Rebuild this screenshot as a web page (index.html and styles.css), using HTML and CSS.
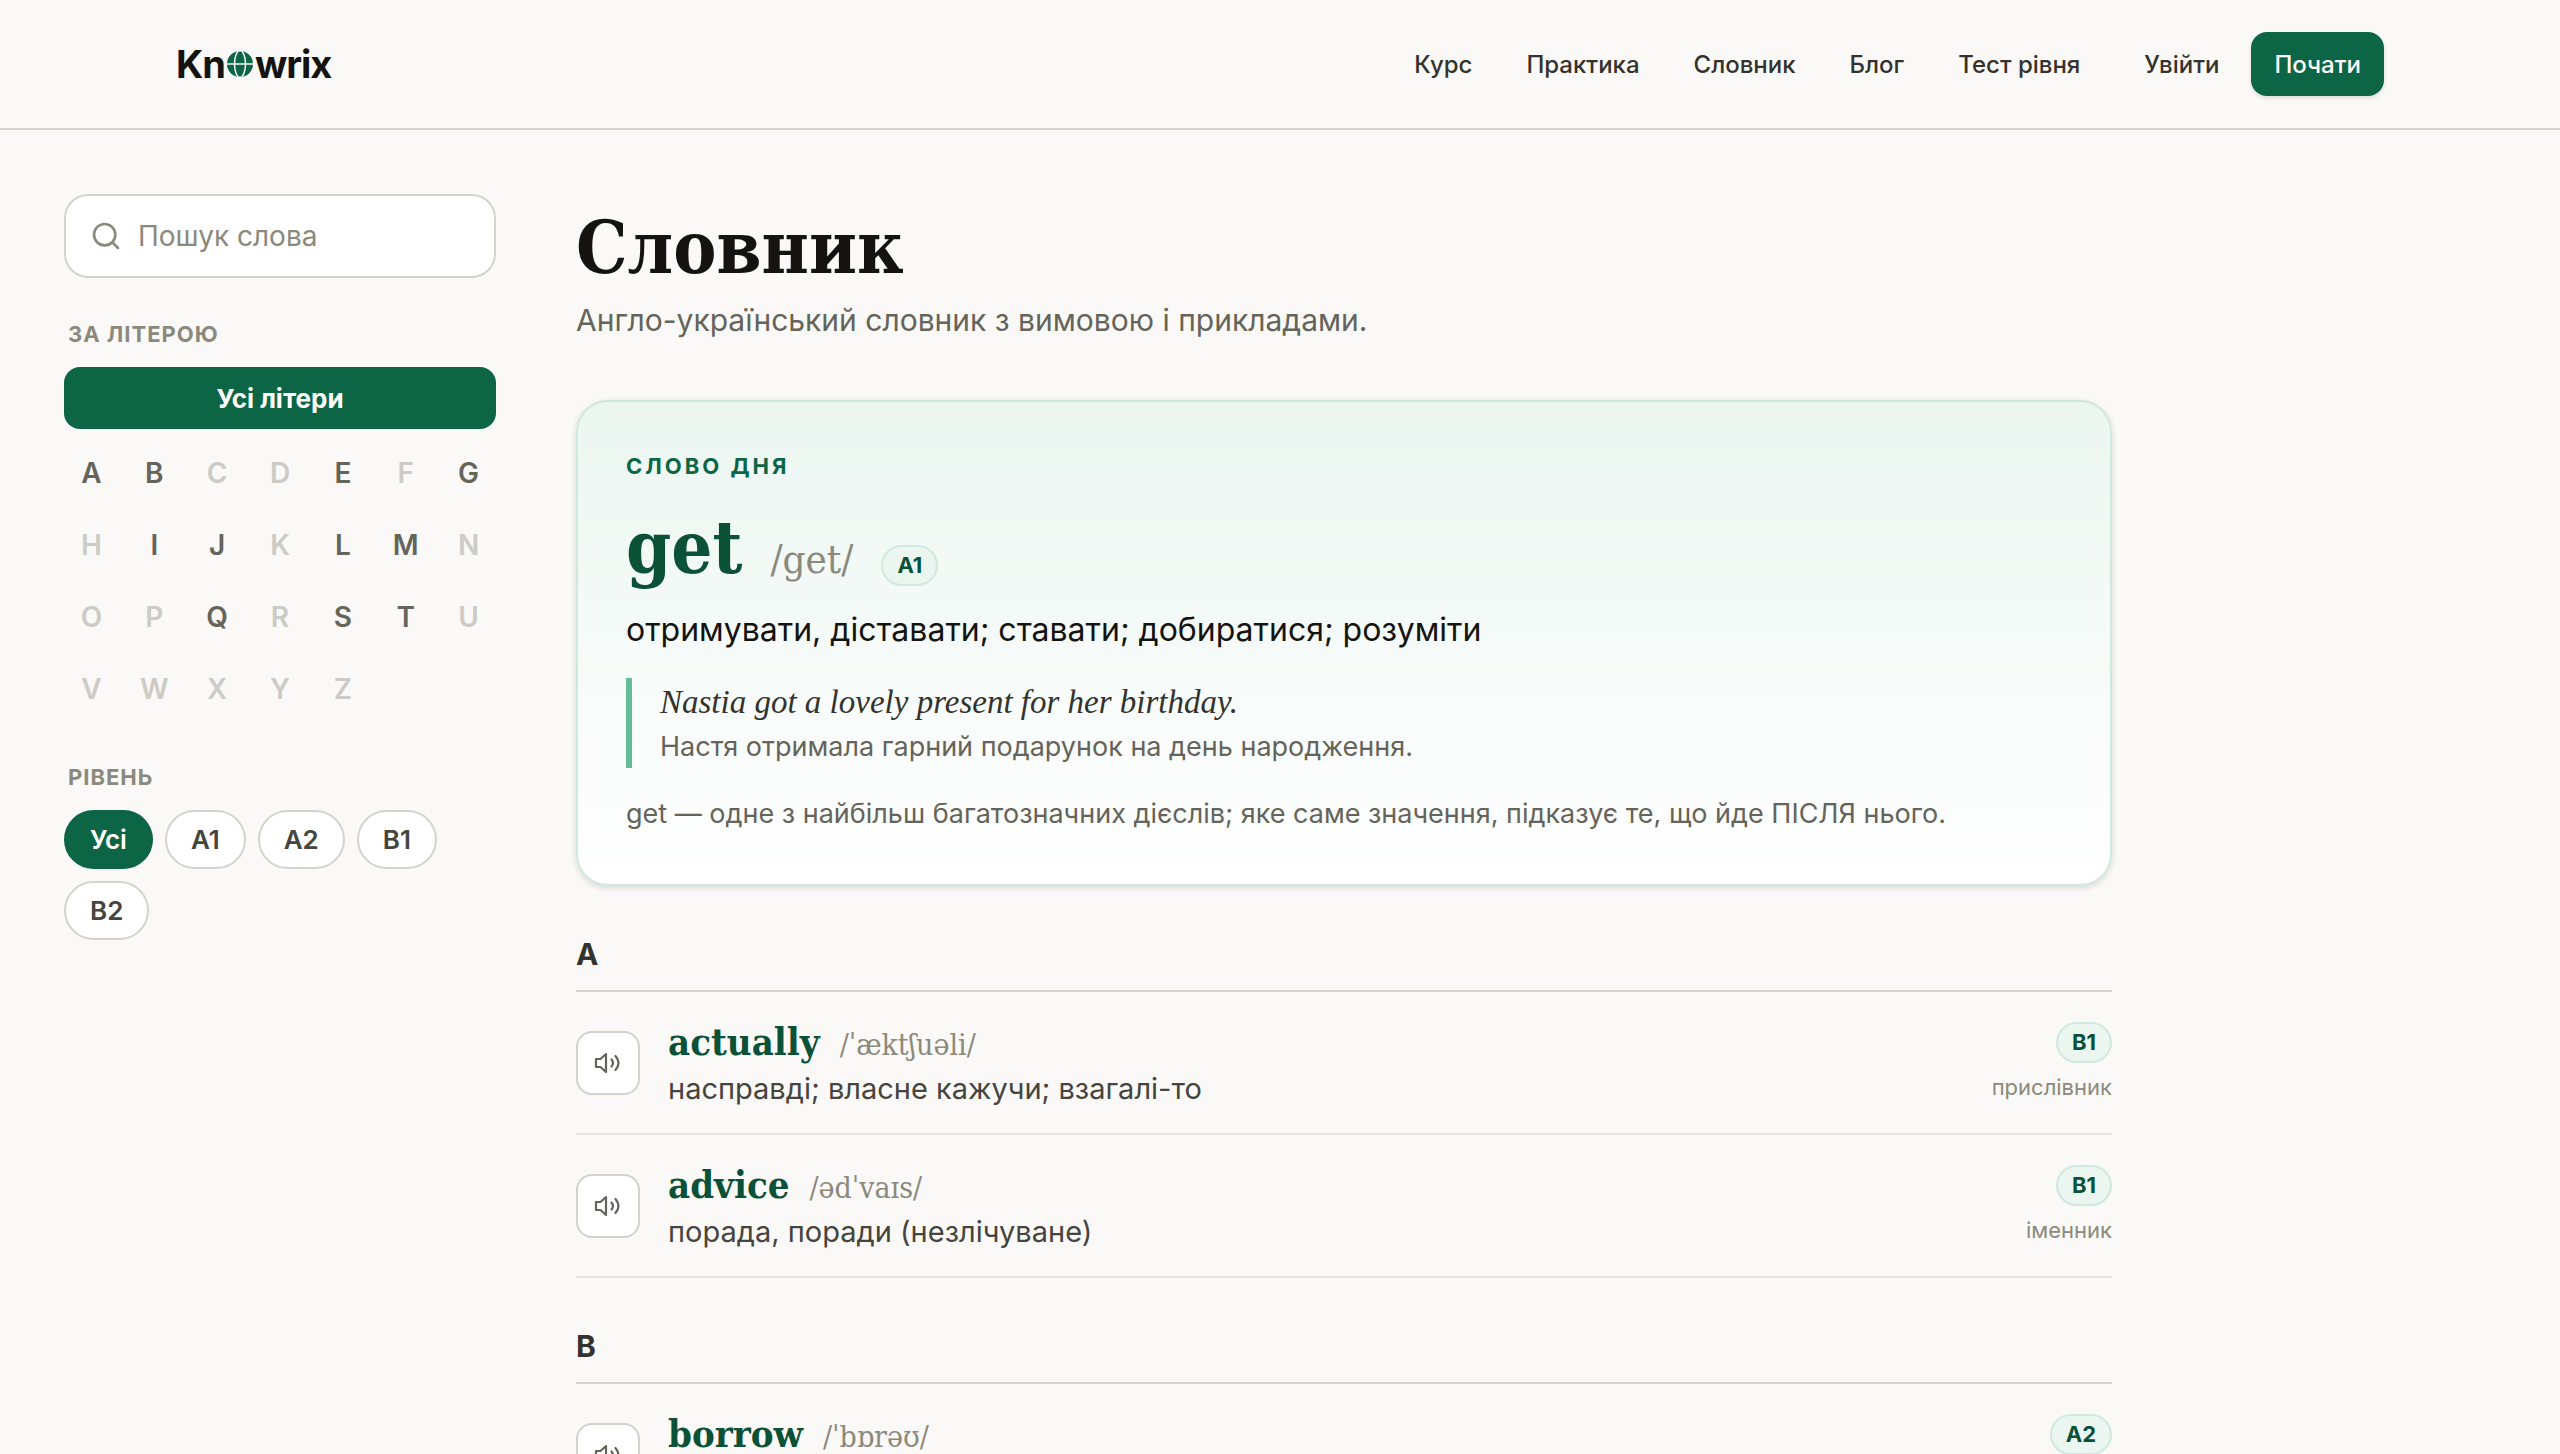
FILE: index.html
```html
<!DOCTYPE html>
<html lang="uk">
<head>
<meta charset="utf-8">
<title>Словник — Knowrix</title>
<meta name="viewport" content="width=device-width, initial-scale=1">
<link rel="stylesheet" href="styles.css">
</head>
<body>
<svg class="sprite" aria-hidden="true">
  <symbol id="speaker" viewBox="0 0 28 28" fill="none" stroke="currentColor" stroke-width="2.200" stroke-linecap="round" stroke-linejoin="round">
    <path d="M2 10v8h4.500l5.500 5V5l-5.500 5z"/>
    <path d="M17.500 10.500q3 3.500 0 7"/>
    <path d="M21.500 7q6 7 0 14"/>
  </symbol>
</svg>
<header class="site-header">
  <div class="site-header-inner">
    <a class="logo" href="#" aria-label="Knowrix"><span>Kn</span><svg class="logo-globe" viewBox="0 0 28 28" aria-hidden="true"><circle cx="14" cy="14" r="13" fill="#0c6544"/><g fill="none" stroke="#faf9f7" stroke-width="1.500"><ellipse cx="14" cy="14" rx="5.500" ry="13.500"/><path d="M0 14h28"/></g></svg><span>wrix</span></a>
    <nav class="nav">
      <a href="#">Курс</a>
      <a href="#">Практика</a>
      <a href="#">Словник</a>
      <a href="#">Блог</a>
      <a href="#">Тест рівня</a>
    </nav>
    <div class="account">
      <a class="sign-in" href="#">Увійти</a>
      <button class="start" type="button">Почати</button>
    </div>
  </div>
</header>
<div class="page">
  <aside class="sidebar">
    <label class="search">
      <svg class="search-icon" viewBox="0 0 24 24" fill="none" stroke="currentColor" stroke-width="2" stroke-linecap="round" aria-hidden="true"><circle cx="11" cy="11" r="8"/><path d="m21 21-4.300-4.300"/></svg>
      <input class="search-input" type="search" placeholder="Пошук слова" aria-label="Пошук слова">
    </label>
    <section class="filter">
      <h2 class="filter-title">За літерою</h2>
      <button class="all-letters" type="button">Усі літери</button>
      <div class="letters">
        <button type="button">A</button><button type="button">B</button><button type="button" disabled>C</button><button type="button" disabled>D</button><button type="button">E</button><button type="button" disabled>F</button><button type="button">G</button>
        <button type="button" disabled>H</button><button type="button">I</button><button type="button">J</button><button type="button" disabled>K</button><button type="button">L</button><button type="button">M</button><button type="button" disabled>N</button>
        <button type="button" disabled>O</button><button type="button" disabled>P</button><button type="button">Q</button><button type="button" disabled>R</button><button type="button">S</button><button type="button">T</button><button type="button" disabled>U</button>
        <button type="button" disabled>V</button><button type="button" disabled>W</button><button type="button" disabled>X</button><button type="button" disabled>Y</button><button type="button" disabled>Z</button>
      </div>
    </section>
    <section class="filter">
      <h2 class="filter-title">Рівень</h2>
      <div class="levels">
        <button class="level active" type="button">Усі</button>
        <button class="level" type="button">A1</button>
        <button class="level" type="button">A2</button>
        <button class="level" type="button">B1</button>
        <button class="level" type="button">B2</button>
      </div>
    </section>
  </aside>
  <main class="content">
    <h1 class="title">Словник</h1>
    <p class="subtitle">Англо-український словник з вимовою і прикладами.</p>
    <article class="daily">
      <p class="daily-label">Слово дня</p>
      <div class="daily-head">
        <h2 class="daily-word">get</h2>
        <span class="daily-ipa">/get/</span>
        <span class="tag">A1</span>
      </div>
      <p class="daily-meaning">отримувати, діставати; ставати; добиратися; розуміти</p>
      <blockquote class="example">
        <p class="example-en">Nastia got a lovely present for her birthday.</p>
        <p class="example-uk">Настя отримала гарний подарунок на день народження.</p>
      </blockquote>
      <p class="daily-note">get — одне з найбільш багатозначних дієслів; яке саме значення, підказує те, що йде ПІСЛЯ нього.</p>
    </article>
    <section class="group">
      <h2 class="group-title">A</h2>
      <div class="entry">
        <button class="listen" type="button" aria-label="Слухати actually"><svg class="listen-icon"><use href="#speaker"/></svg></button>
        <div class="entry-text">
          <div class="entry-head"><a class="entry-word" href="#">actually</a><span class="entry-ipa">/ˈæktʃuəli/</span></div>
          <p class="entry-meaning">насправді; власне кажучи; взагалі-то</p>
        </div>
        <div class="entry-meta"><span class="tag">B1</span><span class="part">прислівник</span></div>
      </div>
      <div class="entry">
        <button class="listen" type="button" aria-label="Слухати advice"><svg class="listen-icon"><use href="#speaker"/></svg></button>
        <div class="entry-text">
          <div class="entry-head"><a class="entry-word" href="#">advice</a><span class="entry-ipa">/ədˈvaɪs/</span></div>
          <p class="entry-meaning">порада, поради (незлічуване)</p>
        </div>
        <div class="entry-meta"><span class="tag">B1</span><span class="part">іменник</span></div>
      </div>
    </section>
    <section class="group">
      <h2 class="group-title">B</h2>
      <div class="entry">
        <button class="listen" type="button" aria-label="Слухати borrow"><svg class="listen-icon"><use href="#speaker"/></svg></button>
        <div class="entry-text">
          <div class="entry-head"><a class="entry-word" href="#">borrow</a><span class="entry-ipa">/ˈbɒrəʊ/</span></div>
        </div>
        <div class="entry-meta"><span class="tag">A2</span></div>
      </div>
    </section>
  </main>
</div>
</body>
</html>
```
FILE: styles.css
```css
:root {
  --bg: #faf9f7;
  --ink: #14130f;
  --text: #33322e;
  --text-2: #45443f;
  --muted: #65645a;
  --faint: #8a897c;
  --line: #d3d3cb;
  --line-soft: #e6e5e1;
  --green: #0c6544;
  --green-dark: #0b5138;
  --green-tint: #ebf6f1;
  --green-line: #cfe9de;
  --sans: Inter, "Liberation Sans", sans-serif;
  --serif: "DejaVu Serif Condensed", "DejaVu Serif", serif;
}

* { box-sizing: border-box; }

html { scrollbar-width: none; }

body {
  margin: 0;
  background: var(--bg);
  color: var(--text);
  font-family: var(--sans);
}

h1, h2, p, blockquote { margin: 0; }
a { color: inherit; text-decoration: none; }
button, input { font-family: inherit; }
button { cursor: pointer; padding: 0; border: 0; }

.sprite { display: none; }

.site-header { border-bottom: 2px solid var(--line); }

.site-header-inner {
  display: flex;
  align-items: center;
  max-width: 2304px;
  height: 128px;
  margin: 0 auto;
  padding: 0 48px;
}

.logo {
  display: flex;
  align-items: center;
  margin-right: auto;
  color: var(--ink);
  font-size: 38px;
  font-weight: 700;
  line-height: 48px;
  letter-spacing: -1px;
}

.logo-globe {
  width: 28px;
  height: 28px;
  margin: 0 1px;
}

.nav {
  display: flex;
  gap: 54px;
  font-size: 24px;
  font-weight: 500;
}

.account {
  display: flex;
  align-items: center;
  gap: 32px;
  margin-left: 64px;
  font-size: 24px;
  font-weight: 500;
}

.start {
  height: 64px;
  padding: 0 23px;
  border-radius: 16px;
  background: var(--green);
  color: #fff;
  font-size: 24px;
  font-weight: 500;
  box-shadow: 0 2px 4px rgba(20, 19, 15, .12);
}

.page {
  display: flex;
  gap: 80px;
  padding: 64px;
}

.sidebar {
  flex: 0 0 432px;
  min-width: 0;
}

.search {
  display: flex;
  align-items: center;
  gap: 16px;
  height: 84px;
  padding: 0 24px;
  border: 2px solid var(--line);
  border-radius: 24px;
  background: #fff;
}

.search-icon { flex: none; width: 32px; height: 32px; color: var(--faint); }

.search-input {
  flex: 1;
  min-width: 0;
  padding: 0;
  border: 0;
  outline: 0;
  background: none;
  color: var(--text);
  font-size: 28px;
}

.search-input::placeholder { color: var(--faint); opacity: 1; }

.filter { margin-top: 40px; }

.filter-title {
  margin: 0 4px 16px;
  color: var(--faint);
  font-size: 22px;
  font-weight: 700;
  line-height: 33px;
  letter-spacing: 1px;
  text-transform: uppercase;
}

.all-letters {
  display: block;
  width: 100%;
  height: 62px;
  margin-bottom: 12px;
  border-radius: 16px;
  background: var(--green);
  color: #fff;
  font-size: 26px;
  font-weight: 700;
}

.letters {
  display: grid;
  grid-template-columns: repeat(7, 1fr);
  gap: 8px;
}

.letters button {
  height: 64px;
  background: none;
  color: var(--muted);
  font-size: 28px;
  font-weight: 600;
}

.letters button:disabled { color: #cccbc5; }

.levels {
  display: flex;
  flex-wrap: wrap;
  gap: 12px;
}

.level {
  height: 59px;
  padding: 0 24px;
  border: 2px solid var(--line);
  border-radius: 32px;
  background: #fff;
  color: var(--text-2);
  font-size: 26px;
  font-weight: 600;
}

.level.active {
  border-color: var(--green);
  background: var(--green);
  color: #fff;
}

.content {
  flex: 1;
  min-width: 0;
  max-width: 1536px;
}

.title {
  padding-top: 10px;
  color: var(--ink);
  font-family: var(--serif);
  font-size: 72px;
  font-weight: 700;
  line-height: 88px;
}

.subtitle {
  margin-top: 4px;
  color: var(--muted);
  font-size: 30px;
  line-height: 48px;
}

.daily {
  margin-top: 56px;
  padding: 48px;
  border: 2px solid var(--green-line);
  border-radius: 32px;
  background: linear-gradient(var(--green-tint), #fff);
  box-shadow: 0 2px 6px rgba(20, 19, 15, .14);
}

.daily-label {
  color: var(--green);
  font-size: 22px;
  font-weight: 700;
  line-height: 32px;
  letter-spacing: 3px;
  text-transform: uppercase;
}

.daily-head {
  display: flex;
  align-items: baseline;
  gap: 28px;
  margin-top: 16px;
}

.daily-word {
  color: var(--green-dark);
  font-family: var(--serif);
  font-size: 72px;
  font-weight: 700;
  line-height: 100px;
}

.daily-ipa {
  color: var(--faint);
  font-family: var(--serif);
  font-size: 40px;
}

.tag {
  padding: 0 14px;
  border: 2px solid var(--green-line);
  border-radius: 24px;
  background: var(--green-tint);
  color: var(--green-dark);
  font-size: 22px;
  font-weight: 700;
  line-height: 37px;
}

.daily-meaning {
  margin-top: 8px;
  color: var(--ink);
  font-size: 32px;
  line-height: 48px;
}

.example {
  margin-top: 24px;
  padding-left: 28px;
  border-left: 6px solid #65bc98;
}

.example-en {
  color: var(--text);
  font-family: "Liberation Serif", serif;
  font-size: 33px;
  font-style: italic;
  line-height: 48px;
}

.example-uk {
  color: var(--muted);
  font-size: 27px;
  line-height: 42px;
}

.daily-note {
  margin-top: 24px;
  color: var(--muted);
  font-size: 27px;
  line-height: 44px;
}

.group { margin-top: 48px; }

.group-title {
  padding-bottom: 16px;
  border-bottom: 2px solid var(--line);
  font-size: 30px;
  font-weight: 700;
  line-height: 40px;
}

.entry {
  display: flex;
  gap: 28px;
  height: 143px;
  border-bottom: 2px solid var(--line-soft);
}

.listen {
  display: grid;
  place-items: center;
  align-self: center;
  width: 64px;
  height: 64px;
  border: 2px solid var(--line);
  border-radius: 16px;
  background: #fff;
  color: var(--muted);
}

.listen-icon { width: 28px; height: 28px; }

.entry-text {
  flex: 1;
  min-width: 0;
  padding-top: 26px;
}

.entry-head {
  display: flex;
  align-items: baseline;
  gap: 20px;
}

.entry-word {
  color: var(--green-dark);
  font-family: var(--serif);
  font-size: 38px;
  font-weight: 700;
  line-height: 48px;
}

.entry-ipa {
  color: var(--faint);
  font-family: var(--serif);
  font-size: 30px;
}

.entry-meaning {
  color: var(--text-2);
  font-size: 29px;
  line-height: 46px;
}

.entry-meta {
  display: flex;
  flex-direction: column;
  align-items: flex-end;
  gap: 8px;
  padding-top: 30px;
}

.part {
  color: var(--faint);
  font-size: 22px;
  line-height: 32px;
}
```
